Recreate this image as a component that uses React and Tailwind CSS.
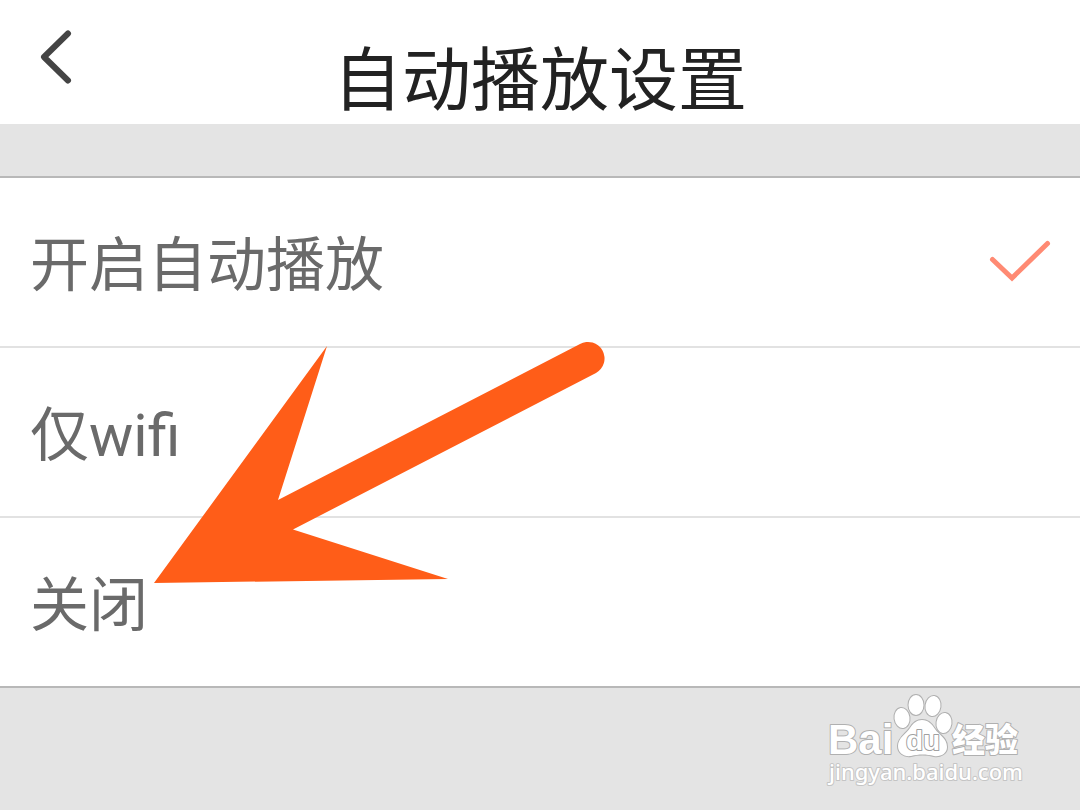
import { useState } from "react";

const OPTIONS = [
  { value: "on", label: "开启自动播放" },
  { value: "wifi", label: "仅wifi" },
  { value: "off", label: "关闭" },
];

function CheckIcon() {
  return (
    <svg
      className="h-11 w-16 shrink-0"
      viewBox="0 0 64 44"
      fill="none"
      stroke="#ff8a73"
      strokeWidth="5"
      strokeLinecap="round"
      aria-hidden="true"
    >
      <path d="M4.500 21.500 24 40 59.500 5.500" />
    </svg>
  );
}

function Arrow() {
  return (
    <svg
      className="pointer-events-none absolute top-40 left-38 h-[248px] w-[456px]"
      viewBox="152 338 456 248"
      fill="#ff5d18"
      aria-hidden="true"
    >
      <path d="M154 583 327 346 278 500 580 344A16.500 16.500 0 0 1 596 373L293 529.500 448 579Z" />
    </svg>
  );
}

function Watermark() {
  return (
    <svg
      className="h-[100px] w-[210px]"
      viewBox="0 0 210 100"
      fill="#fff"
      stroke="#b0b0b0"
      strokeWidth="2"
      strokeLinejoin="round"
      fontFamily="'Noto Sans', 'Noto Sans CJK SC', sans-serif"
      style={{ paintOrder: "stroke" }}
    >
      <text
        x="8"
        y="64"
        fontSize="42"
        fontWeight="700"
        fontFamily="'Liberation Sans', sans-serif"
      >
        Bai
      </text>
      <ellipse cx="82" cy="28" rx="7.500" ry="10" transform="rotate(-8 82 28)" />
      <ellipse cx="96" cy="15" rx="7.500" ry="10" />
      <ellipse cx="113" cy="16" rx="7.500" ry="10" transform="rotate(8 113 16)" />
      <ellipse cx="124" cy="33" rx="7.500" ry="10" transform="rotate(8 124 33)" />
      <path d="M102 30C108 30 112 34 115 39C119 45 127 48 127 57C127 64 120 67 114 66C106 64 99 64 91 66C84 67 78 63 78 56C78 48 86 44 90 38C93 33 97 30 102 30Z" />
      <text
        x="86"
        y="60"
        fontSize="28"
        fontWeight="700"
        fontFamily="'Liberation Sans', sans-serif"
        stroke="#a0a0a0"
      >
        du
      </text>
      <text x="132" y="62" fontSize="33" fontWeight="900">
        经验
      </text>
      <text x="9" y="90" fontSize="22" fontWeight="500" stroke="#c4c4c4">
        jingyan.baidu.com
      </text>
    </svg>
  );
}

export default function App() {
  const [selected, setSelected] = useState("on");

  return (
    <div className="flex min-h-screen flex-col bg-[#e4e4e4] font-[Roboto,'Noto_Sans_CJK_SC',sans-serif]">
      <header className="flex items-start bg-white px-7">
        <button type="button" aria-label="返回" className="mt-7 h-14 w-14">
          <svg
            className="h-14 w-14"
            viewBox="0 0 56 56"
            fill="none"
            stroke="#444"
            strokeWidth="6"
            strokeLinecap="round"
            strokeLinejoin="round"
          >
            <path d="M40 5.500 16 29 40 52.500" />
          </svg>
        </button>
        <h1 className="flex-1 pt-10 text-center text-[69px] leading-[84px] text-[#222]">
          自动播放设置
        </h1>
        <div className="w-14" />
      </header>

      <main className="relative mt-13 border-y-2 border-[#b8b8b8] bg-white">
        <div
          role="radiogroup"
          aria-label="自动播放设置"
          className="divide-y-2 divide-[#e2e2e2]"
        >
          {OPTIONS.map((o) => (
            <label
              key={o.value}
              className="flex h-[170px] items-center justify-between pr-7 pb-1 pl-[30px] text-[59px] leading-none text-[#6a6a6a] last:h-[168px]"
            >
              <input
                type="radio"
                name="autoplay"
                value={o.value}
                checked={selected === o.value}
                onChange={() => setSelected(o.value)}
                className="sr-only"
              />
              <span className="pt-2.5">{o.label}</span>
              {selected === o.value && <CheckIcon />}
            </label>
          ))}
        </div>
        <Arrow />
      </main>

      <footer className="flex justify-end pt-0.5 pr-[50px]">
        <Watermark />
      </footer>
    </div>
  );
}
